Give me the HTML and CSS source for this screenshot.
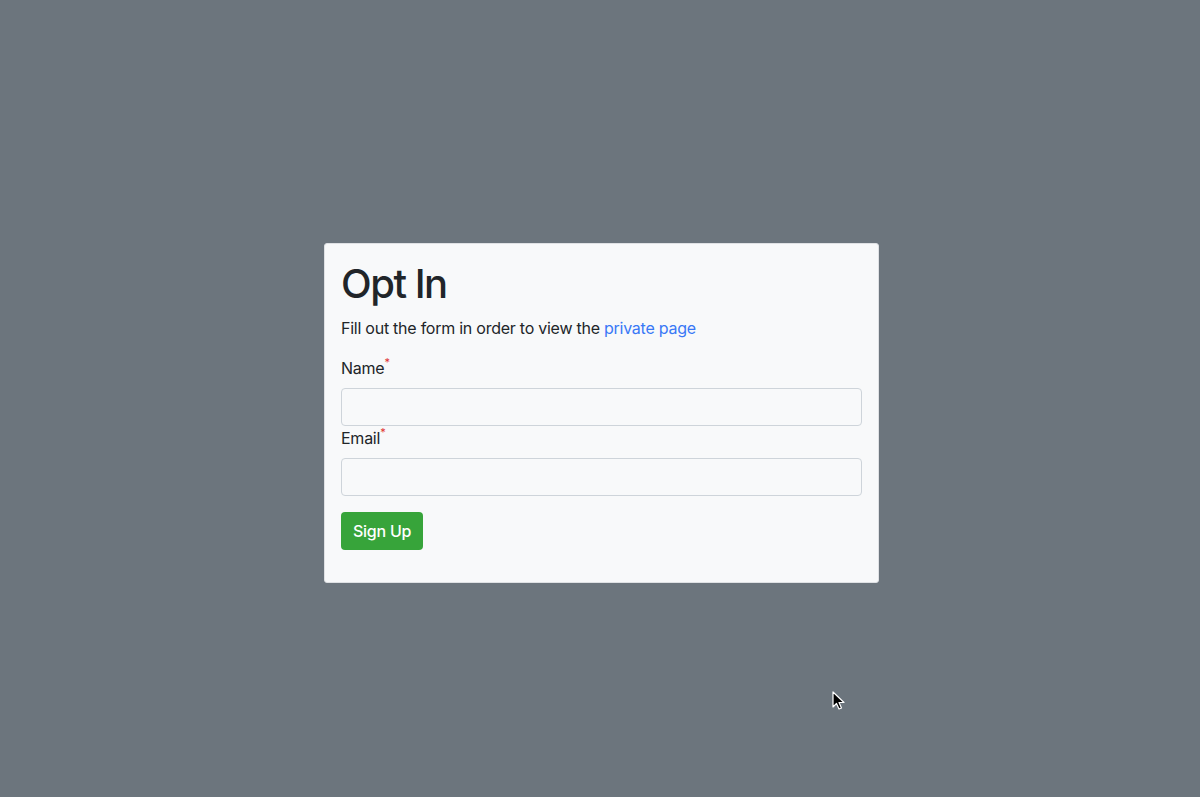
FILE: index.html
```html
<!DOCTYPE html>
<html lang="en">
<head>
<meta charset="utf-8">
<title>Opt In</title>
<link rel="stylesheet" href="styles.css">
</head>
<body>
<div class="page">
  <div class="card">
    <h1 class="title">Opt In</h1>
    <p class="lead-text">Fill out the form in order to view the <a href="#" class="link">private page</a></p>
    <form class="form">
      <label class="label" for="name">Name<sup class="req">*</sup></label>
      <input class="input" id="name" type="text">
      <label class="label" for="email">Email<sup class="req">*</sup></label>
      <input class="input" id="email" type="email">
      <button type="button" class="btn">Sign Up</button>
    </form>
  </div>
</div>
<svg class="cursor" width="14" height="20" viewBox="0 0 14 20" xmlns="http://www.w3.org/2000/svg">
  <path d="M1 1 L1 16 L4.5 12.5 L7 18 L9.5 17 L7 11.5 L12 11.5 Z" fill="#000" stroke="#fff" stroke-width="1.2" stroke-linejoin="round"/>
</svg>
</body>
</html>
```

FILE: styles.css
```css
html, body {
  margin: 0;
  padding: 0;
  height: 100%;
}
body {
  background: #6c757d;
  font-family: Inter, "Noto Sans", "Liberation Sans", sans-serif;
  font-size: 16px;
  line-height: 1.5;
  letter-spacing: -0.25px;
  color: #212529;
  overflow: hidden;
}
.page {
  padding: 243px 0 0 324px;
}
.card {
  box-sizing: border-box;
  width: 555px;
  background: #f8f9fa;
  border: 1px solid #dfe1e4;
  border-radius: 3px;
  padding: 16px 16px 16px 16px;
}
.title {
  margin: 0 0 8px 0;
  font-size: 40px;
  font-weight: 500;
  line-height: 48px;
  letter-spacing: -1.5px;
}
.lead-text {
  margin: 0 0 16px 0;
}
.link {
  color: #3878f6;
  text-decoration: none;
}
.form {
  display: flex;
  flex-direction: column;
  align-items: flex-start;
  margin-bottom: 16px;
}
.label {
  display: block;
  margin-bottom: 8px;
  line-height: 24px;
}
.req {
  color: #e03131;
  font-size: 11px;
  line-height: 0;
  position: relative;
  top: -2px;
}
.input {
  box-sizing: border-box;
  width: 100%;
  height: 38px;
  border: 1px solid #ced4da;
  border-radius: 4px;
  background: #f8f9fa;
  margin: 0;
  padding: 6px 12px;
  font: inherit;
}
.btn {
  margin-top: 16px;
  height: 38px;
  border: none;
  border-radius: 4px;
  background: #37a43a;
  color: #fff;
  font-family: inherit;
  font-size: 16px;
  font-weight: 500;
  letter-spacing: -0.25px;
  white-space: nowrap;
  padding: 0 12px;
}
.cursor {
  position: absolute;
  left: 832px;
  top: 691px;
}
```
